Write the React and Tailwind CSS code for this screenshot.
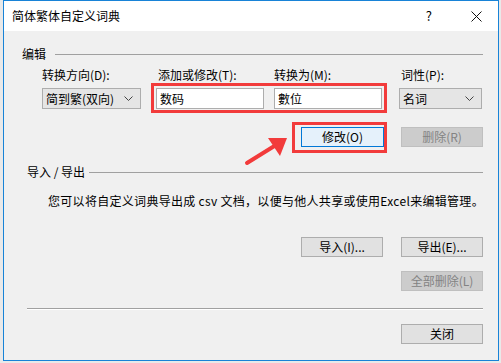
import React from "react";

const font = { fontFamily: '"Noto Sans CJK SC", "Noto Sans", sans-serif' };

const Chevron = () => (
  <svg width="9" height="5" viewBox="0 0 9 5" className="shrink-0">
    <path d="M0.5 0.5 L4.5 4.5 L8.5 0.5" fill="none" stroke="#444" strokeWidth="1" />
  </svg>
);

const Combo = ({ value, width }) => (
  <div
    className={`flex items-center justify-between h-[21px] pl-[3px] pr-[7px] bg-[#e5e5e5] border border-[#adadad] text-[12px] text-black ${width}`}
  >
    <span className="leading-[16px]">{value}</span>
    <Chevron />
  </div>
);

const Field = ({ value }) => (
  <div className="flex items-center h-[21px] w-[108px] pl-[3px] bg-white border border-[#adadad] text-[12px] leading-[16px] text-black">
    {value}
  </div>
);

const Btn = ({ children, disabled, focus, w = "w-[83px]" }) => (
  <div
    className={`flex items-center justify-center h-[20px] ${w} text-[12px] leading-[16px] border ${
      disabled
        ? "bg-[#cccccc] border-[#bfbfbf] text-[#838383]"
        : focus
        ? "bg-[#e5f1fb] border-[#0078d7] text-black"
        : "bg-[#e1e1e1] border-[#adadad] text-black"
    }`}
  >
    {children}
  </div>
);

const Header = ({ text, gap, className = "" }) => (
  <div className={`flex items-center h-[16px] ${className}`}>
    <span className="text-[12px] leading-[16px] text-black whitespace-pre">{text}</span>
    <div className={`flex-1 h-px bg-[#a0a0a0] ${gap}`} />
  </div>
);

export default function App() {
  return (
    <div className="w-[501px] h-[363px] bg-[#e9e9e9] overflow-hidden" style={font}>
      <div className="ml-[3px] w-[496px] h-[361px] border border-[#1883d7] flex flex-col bg-[#f0f0f0]">
        {/* title bar */}
        <div className="h-[30px] bg-white flex items-center pl-[8px] pr-[16px]">
          <span className="text-[12px] leading-[16px] text-black">简体繁体自定义词典</span>
          <span className="ml-auto text-[13px] text-black">?</span>
          <svg width="11" height="11" viewBox="0 0 11 11" className="ml-[39px]">
            <path d="M0.5 0.5 L10.5 10.5 M10.5 0.5 L0.5 10.5" stroke="#111" strokeWidth="1" />
          </svg>
        </div>

        {/* body */}
        <div className="relative flex-1 flex flex-col pl-[18px] pr-[15px]">
          <Header text="编辑" gap="ml-[9px]" className="mt-[15px]" />

          <div className="flex ml-[20px] mt-[5px] h-[16px] text-[12px] leading-[16px] text-black">
            <span className="w-[115px]">转换方向(D):</span>
            <span className="w-[117px] pl-[1px]">添加或修改(T):</span>
            <span className="w-[126px]">转换为(M):</span>
            <span className="pl-[1px]">词性(P):</span>
          </div>

          <div className="flex items-center ml-[20px] mt-[5px]">
            <Combo value="简到繁(双向)" width="w-[99px]" />
            <div className="ml-[15px]">
              <Field value="数码" />
            </div>
            <div className="ml-[10px]">
              <Field value="數位" />
            </div>
            <div className="ml-[17px]">
              <Combo value="名词" width="w-[83px]" />
            </div>
          </div>

          <div className="flex justify-end items-center gap-[17px] mt-[18px]">
            <Btn focus>修改(O)</Btn>
            <Btn disabled w="w-[82px]">删除(R)</Btn>
          </div>

          <Header text="导入 / 导出" gap="ml-[4px]" className="mt-[17px] ml-[5px]" />

          <div className="mt-[13px] ml-[26px] h-[16px] text-[12px] leading-[16px] tracking-[0.3px] text-black whitespace-nowrap">
            您可以将自定义词典导出成 csv 文档，以便与他人共享或使用Excel来编辑管理。
          </div>

          <div className="flex justify-end gap-[18px] mt-[28px]">
            <Btn w="w-[82px]">导入(I)...</Btn>
            <Btn w="w-[82px]">导出(E)...</Btn>
          </div>

          <div className="flex justify-end mt-[14px]">
            <Btn disabled w="w-[82px]">全部删除(L)</Btn>
          </div>

          <div className="mt-[17px] ml-[5px] h-[2px] border-t border-[#a0a0a0] border-b border-b-white" />

          <div className="flex justify-end mt-[14px]">
            <Btn w="w-[82px]">关闭</Btn>
          </div>

          {/* annotations */}
          <div className="absolute left-[147px] top-[52px] w-[236px] h-[30px] border-[3px] border-[#f23b3b]" />
          <div className="absolute left-[288px] top-[91px] w-[95px] h-[31px] border-[3px] border-[#f23b3b]" />
          <svg className="absolute left-[238px] top-[101px]" width="50" height="34" viewBox="0 0 50 34">
            <path d="M5 31 L34 13" stroke="#f23b3b" strokeWidth="4" strokeLinecap="round" />
            <path d="M45 6 L26 6 L38 24 Z" fill="#f23b3b" />
          </svg>
        </div>
      </div>
    </div>
  );
}
